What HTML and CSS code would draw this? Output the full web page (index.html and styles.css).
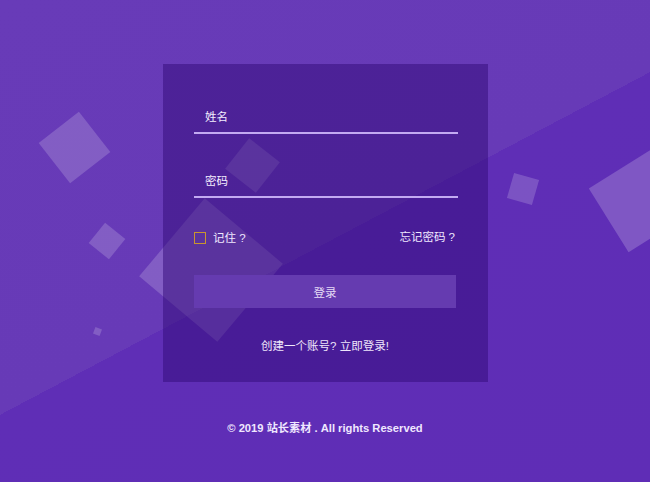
FILE: index.html
```html
<!DOCTYPE html>
<html lang="zh-CN">
<head>
<meta charset="utf-8">
<title>登录</title>
<link rel="stylesheet" href="styles.css">
</head>
<body>
<div class="shapes" aria-hidden="true">
  <div class="sq sq1"></div>
  <div class="sq sq2"></div>
  <div class="sq sq3"></div>
  <div class="sq sq4"></div>
  <div class="sq sq5"></div>
  <div class="sq sq6"></div>
  <div class="sq sq7"></div>
</div>
<main class="page">
  <form class="card">
    <input class="field field-first" type="text" placeholder="姓名">
    <input class="field field-second" type="password" placeholder="密码">
    <div class="options">
      <label class="remember"><input class="check" type="checkbox"><span>记住 ?</span></label>
      <a class="forgot" href="#">忘记密码 ?</a>
    </div>
    <button class="submit" type="button">登录</button>
    <p class="signup">创建一个账号? 立即登录!</p>
  </form>
  <footer class="footer">© 2019 站长素材 . All rights Reserved</footer>
</main>
</body>
</html>
```
FILE: styles.css
```css
html, body {
  margin: 0;
  padding: 0;
  height: 100%;
}
body {
  position: relative;
  overflow: hidden;
  font-family: "Liberation Sans", "Noto Sans CJK SC", sans-serif;
  background: linear-gradient(152.2deg, #683bb8 0%, #673ab7 50.3%, #5f2eb6 50.3%, #5f2db6 100%);
  color: #f0e8ff;
}
.shapes {
  position: absolute;
  inset: 0;
  z-index: 0;
  overflow: hidden;
}
.sq {
  position: absolute;
  background: rgba(255, 255, 255, 0.18);
}
.sq1 { left: 48.5px; top: 121.5px; width: 51px; height: 51px; transform: rotate(52deg); }
.sq2 { left: 94px; top: 228px; width: 26px; height: 26px; transform: rotate(39deg); }
.sq3 { left: 93.5px; top: 327.5px; width: 7px; height: 7px; transform: rotate(20deg); }
.sq4 { left: 160px; top: 219px; width: 102px; height: 102px; transform: rotate(40deg); }
.sq5 { left: 232.5px; top: 145.5px; width: 39px; height: 39px; transform: rotate(38deg); }
.sq6 { left: 510px; top: 176px; width: 26px; height: 26px; transform: rotate(16deg); }
.sq7 { left: 602.5px; top: 162.5px; width: 75px; height: 75px; transform: rotate(58deg); background: rgba(255, 255, 255, 0.2); }

.page {
  position: relative;
  z-index: 1;
  display: flex;
  flex-direction: column;
  align-items: center;
  padding-top: 64px;
}
.card {
  box-sizing: border-box;
  width: 325px;
  height: 318px;
  margin: 0 0 0 1px;
  padding: 35px 30px 0 31px;
  background: rgba(50, 10, 120, 0.5);
  display: flex;
  flex-direction: column;
}
.field {
  box-sizing: border-box;
  display: block;
  width: 264px;
  height: 35px;
  margin: 0;
  padding: 3px 10px 0 11px;
  border: 0;
  border-bottom: 2px solid #c3aaf2;
  background: transparent;
  outline: none;
  font-family: "Liberation Sans", "Noto Sans CJK SC", sans-serif;
  font-size: 11.5px;
  color: #f4eeff;
}
.field::placeholder {
  color: #f4eeff;
  opacity: 1;
}
.field-second {
  margin-top: 29px;
}
.options {
  display: flex;
  justify-content: space-between;
  align-items: center;
  height: 16px;
  margin-top: 31px;
  width: 262px;
  font-size: 11.5px;
}
.remember {
  display: flex;
  align-items: center;
  gap: 7px;
  color: #f0e8ff;
}
.check {
  appearance: none;
  -webkit-appearance: none;
  box-sizing: border-box;
  width: 12px;
  height: 12px;
  margin: 1px 0 0;
  border: 1.5px solid #c9952e;
  background: transparent;
}
.forgot {
  color: #f0e8ff;
  text-decoration: none;
  margin-right: 1px;
  margin-top: -2px;
}
.submit {
  width: 262px;
  height: 33px;
  margin-top: 30px;
  padding: 0;
  border: 0;
  background: #653bb0;
  color: #e6dcf6;
  font-family: "Liberation Sans", "Noto Sans CJK SC", sans-serif;
  font-size: 11.5px;
}
.signup {
  margin: 30px 0 0;
  width: 262px;
  text-align: center;
  line-height: 16px;
  font-size: 11.5px;
  color: #eee6fb;
}
.footer {
  margin-top: 38px;
  line-height: 16px;
  font-size: 11.2px;
  font-weight: bold;
  color: #f0e8ff;
}
```
